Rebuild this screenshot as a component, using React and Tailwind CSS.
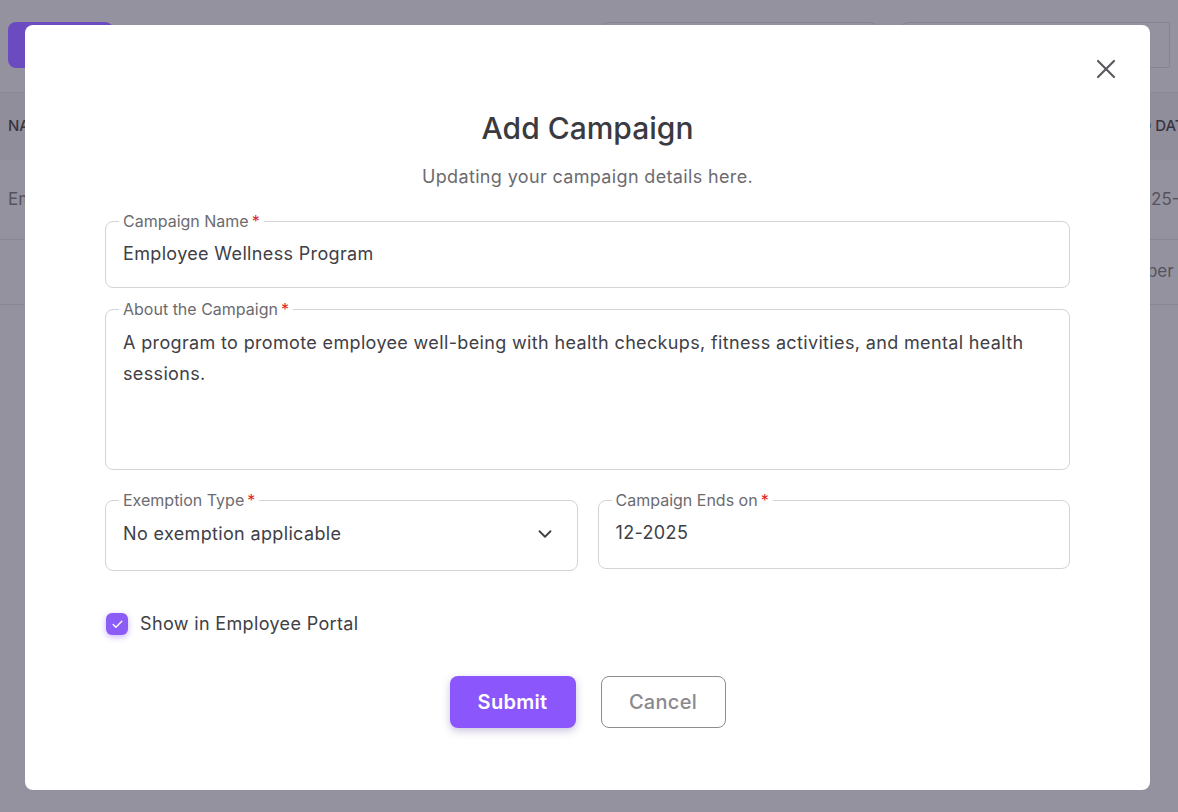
import { ChevronDown, X, Check } from "lucide-react";

const font = { fontFamily: "Inter, 'Noto Sans', sans-serif" };

function Field({ label, children, className = "" }) {
  return (
    <fieldset className={`border border-[#d4d4d8] rounded-lg px-[17px] ${className}`}>
      <legend className="ml-[-4px] px-[4px] text-[16px] leading-[18px] text-[#6b6b70]">
        {label}
        <span className="text-[#dc2626] ml-[3px]">*</span>
      </legend>
      {children}
    </fieldset>
  );
}

function BackgroundPage() {
  return (
    <div className="w-full h-full flex flex-col">
      <div className="h-[93px] flex items-start pt-[22px] px-[8px] border-b border-[#8c8996]">
        <div className="w-[105px] h-[46px] rounded-lg bg-[#6a4cc0]" />
        <div className="flex-1" />
        <div className="w-[278px] h-[46px] rounded-lg border border-[#86838f]" />
        <div className="w-[22px]" />
        <div className="w-[270px] h-[46px] rounded-l-lg border border-[#86838f]" />
      </div>
      <div className="h-[67px] bg-[#918e9b] flex items-center justify-between pl-[8px] text-[15px] font-medium text-[#37343f]">
        <span>NAME</span>
        <span className="w-[58px] whitespace-nowrap overflow-hidden">END DATE</span>
      </div>
      <div className="h-[80px] border-b border-[#8a8794] flex items-center justify-between pl-[8px] text-[17px] text-[#55525e]">
        <span>Employee Wellness</span>
        <span className="w-[48px] whitespace-nowrap overflow-hidden">2025-</span>
      </div>
      <div className="h-[65px] border-b border-[#8a8794] flex items-center justify-end text-[17px] text-[#55525e]">
        <span className="w-[52px] whitespace-nowrap overflow-hidden">Super p</span>
      </div>
    </div>
  );
}

export default function App() {
  return (
    <div style={font} className="relative w-full h-[812px] bg-[#95929f] overflow-hidden">
      <BackgroundPage />
      <div className="absolute left-[25px] top-[25px] w-[1125px] h-[765px] bg-white rounded-lg">
        <div className="relative px-20 pt-[85px]">
          <button className="absolute right-[28px] top-[28px] w-[32px] h-[32px] flex items-center justify-center text-[#5b5b60]">
            <X size={32} strokeWidth={1.6} />
          </button>
          <h2 className="text-center text-[30px] leading-[36px] font-medium text-[#3a3a40]">
            Add Campaign
          </h2>
          <p className="text-center text-[18px] leading-[26px] tracking-[0.35px] text-[#6b6b70] mt-[18px]">
            Updating your campaign details here.
          </p>

          <div className="mt-[22px] flex flex-col text-[#404046]">
            <Field label="Campaign Name">
              <div className="pt-[10px] pb-[20px] text-[18px] leading-[27px] tracking-[0.35px]">
                Employee Wellness Program
              </div>
            </Field>

            <Field label="About the Campaign" className="mt-[12px]">
              <div className="pt-[9px] h-[151px] text-[18px] leading-[31px] tracking-[0.35px]">
                A program to promote employee well-being with health checkups, fitness activities, and mental health sessions.
              </div>
            </Field>

            <div className="mt-[21px] grid grid-cols-2 gap-5">
              <Field label="Exemption Type">
                <div className="pt-[11px] pb-[23px] flex items-center justify-between text-[18px] leading-[27px] tracking-[0.35px]">
                  <span>No exemption applicable</span>
                  <ChevronDown size={22} strokeWidth={2} className="mr-[4px]" />
                </div>
              </Field>
              <Field label="Campaign Ends on" className="self-start">
                <div className="pt-[10px] pb-[22px] text-[18px] leading-[27px] tracking-[0.35px]">
                  12-2025
                </div>
              </Field>
            </div>

            <label className="mt-[40px] ml-[1px] flex items-center gap-3">
              <span className="w-[22px] h-[22px] rounded-[6px] bg-[#8b5cf6] flex items-center justify-center shadow-[0_2px_6px_rgba(139,92,246,0.45)]">
                <Check size={13} strokeWidth={2.5} className="text-white" />
              </span>
              <span className="text-[18px] leading-[26px] tracking-[0.35px]">Show in Employee Portal</span>
            </label>

            <div className="mt-[39px] flex justify-center gap-[25px]">
              <button className="w-[126px] h-[52px] rounded-lg bg-[#8b57fc] text-white text-[20px] tracking-[0.3px] font-semibold shadow-[0_3px_8px_rgba(80,60,140,0.3)]">
                Submit
              </button>
              <button className="w-[125px] h-[52px] rounded-lg border border-[#8d8d90] text-[#8a8a8d] text-[20px] tracking-[0.3px] font-medium">
                Cancel
              </button>
            </div>
          </div>
        </div>
      </div>
    </div>
  );
}
